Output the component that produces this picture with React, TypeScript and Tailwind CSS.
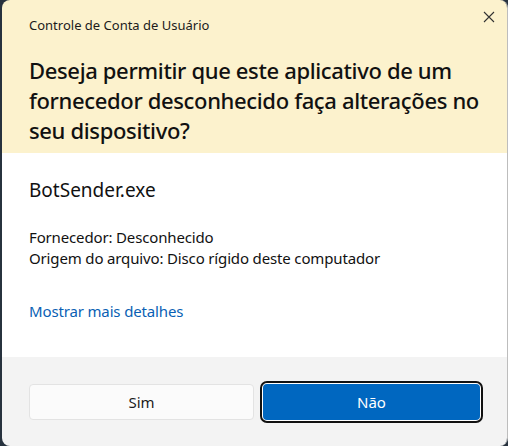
import React from "react";

export default function App() {
  return (
    <div className="w-[508px] h-[446px] bg-[#27323e] flex" style={{ fontFamily: '"Noto Sans", "Open Sans", sans-serif' }}>
      <div className="ml-[2px] flex-1 flex flex-col rounded-[8px] overflow-hidden border-r border-[#bdbdbd]">
        <div className="bg-[#fcf2cd] pl-[27px] pr-[8px] pt-[16px] pb-[8px] relative">
          <div className="text-[13px] leading-[18px] text-[#1b1b1b]">Controle de Conta de Usuário</div>
          <div className="mt-[21px] text-[22px] leading-[30px] font-medium text-[#111] tracking-[-0.35px]">
            Deseja permitir que este aplicativo de um fornecedor desconhecido faça alterações no seu dispositivo?
          </div>
          <button className="absolute right-[12px] top-[11px] w-[12px] h-[12px] flex items-center justify-center">
            <svg width="12" height="12" viewBox="0 0 12 12" fill="none" stroke="#333" strokeWidth="1.1">
              <path d="M1 1 L11 11 M11 1 L1 11" />
            </svg>
          </button>
        </div>
        <div className="bg-white pl-[27px] pt-[24px] h-[204px]">
          <div className="text-[19px] leading-[26px] text-[#111]">BotSender.exe</div>
          <div className="mt-[24px] text-[15px] leading-[21px] text-[#111] tracking-[-0.15px]">
            <div>Fornecedor: Desconhecido</div>
            <div>Origem do arquivo: Disco rígido deste computador</div>
          </div>
          <div className="mt-[32px] text-[15px] leading-[21px] text-[#0a5fb4] tracking-[-0.15px]">Mostrar mais detalhes</div>
        </div>
        <div className="flex-1 bg-[#f3f3f3] pl-[27px] pt-[27px] flex gap-[6px]">
          <button className="w-[225px] h-[36px] rounded-[4px] bg-[#fbfbfb] border border-[#e3e3e3] text-[15px] text-[#1b1b1b]">Sim</button>
          <div className="w-[223px] h-[42px] -mt-[3px] rounded-[7px] border-2 border-[#111] p-[1px] bg-white">
            <button className="w-full h-full rounded-[4px] bg-[#0067c0] text-[15px] text-white">Não</button>
          </div>
        </div>
      </div>
    </div>
  );
}
